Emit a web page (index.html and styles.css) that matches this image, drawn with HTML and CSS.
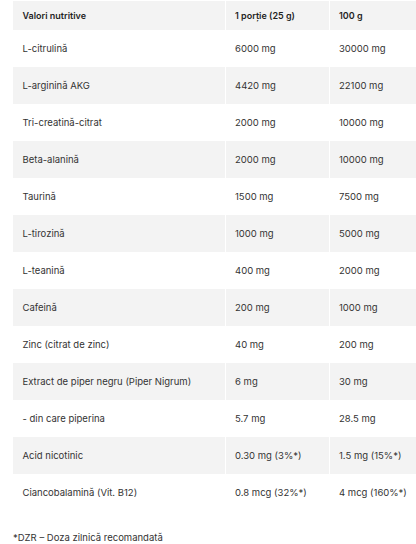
FILE: index.html
```html
<!DOCTYPE html>
<html lang="ro">
<head>
<meta charset="utf-8">
<link rel="stylesheet" href="styles.css">
</head>
<body>
<div class="wrap">
<table class="nt">
<colgroup><col class="c1"><col class="c2"><col class="c3"></colgroup>
<thead>
<tr><th>Valori nutritive</th><th>1 porție (25 g)</th><th>100 g</th></tr>
</thead>
<tbody>
<tr><td>L-citrulină</td><td>6000 mg</td><td>30000 mg</td></tr>
<tr><td>L-arginină AKG</td><td>4420 mg</td><td>22100 mg</td></tr>
<tr><td>Tri-creatină-citrat</td><td>2000 mg</td><td>10000 mg</td></tr>
<tr><td>Beta-alanină</td><td>2000 mg</td><td>10000 mg</td></tr>
<tr><td>Taurină</td><td>1500 mg</td><td>7500 mg</td></tr>
<tr><td>L-tirozină</td><td>1000 mg</td><td>5000 mg</td></tr>
<tr><td>L-teanină</td><td>400 mg</td><td>2000 mg</td></tr>
<tr><td>Cafeină</td><td>200 mg</td><td>1000 mg</td></tr>
<tr><td>Zinc (citrat de zinc)</td><td>40 mg</td><td>200 mg</td></tr>
<tr><td>Extract de piper negru (Piper Nigrum)</td><td>6 mg</td><td>30 mg</td></tr>
<tr><td>- din care piperina</td><td>5.7 mg</td><td>28.5 mg</td></tr>
<tr><td>Acid nicotinic</td><td>0.30 mg (3%*)</td><td>1.5 mg (15%*)</td></tr>
<tr><td>Ciancobalamină (Vit. B12)</td><td>0.8 mcg (32%*)</td><td>4 mcg (160%*)</td></tr>
</tbody>
</table>
<p class="note">*DZR – Doza zilnică recomandată</p>
</div>
</body>
</html>
```
FILE: styles.css
```css
html, body {
  margin: 0;
  padding: 0;
  background: #fff;
  overflow: hidden;
}
body {
  font-family: Inter, "Noto Sans", sans-serif;
  font-size: 9.5px;
  color: #333;
}
.wrap {
  padding: 1px 0 0 13px;
  width: 403px;
  overflow: hidden;
}
.nt {
  border-collapse: collapse;
  table-layout: fixed;
  width: 403px;
}
.c1 { width: 212px; }
.c2 { width: 104px; }
.c3 { width: 87px; }
.nt th, .nt td {
  text-align: left;
  padding: 0 0 0 9.5px;
  white-space: nowrap;
}
.nt th + th, .nt td + td {
  border-left: 1px solid #fff;
}
.nt th {
  height: 29px;
  font-size: 9px;
  font-weight: 600;
  color: #1f1f1f;
  background: #f3f3f3;
}
.nt td {
  height: 37px;
}
.nt tbody tr:nth-child(even) td {
  background: #f3f3f3;
}
.note {
  margin: 20px 0 0 0;
  line-height: 14px;
}
```
